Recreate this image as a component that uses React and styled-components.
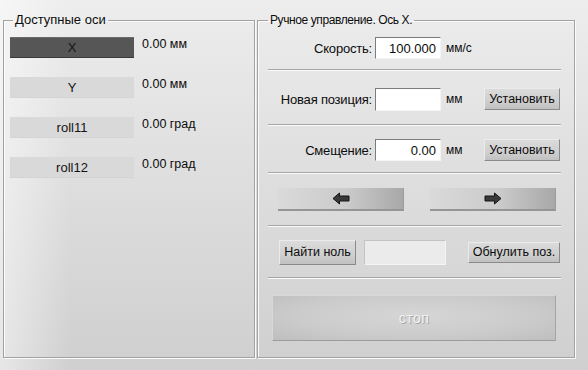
import React from 'react'
import styled, { createGlobalStyle } from 'styled-components'

const Global = createGlobalStyle`
    html, body {
        margin: 0;
        padding: 0;
        background: #d8d8d8;
    }
    body {
        font-family: "Liberation Sans", Arial, sans-serif;
        font-size: 13px;
        color: #0c0c0c;
    }
`

const Window = styled.div`
    width: 588px;
    height: 370px;
    box-sizing: border-box;
    display: flex;
    gap: 2px;
    padding: 13px 13px 12px 3px;
    background:
        linear-gradient(90deg, rgba(255,255,255,0.5) 0%, rgba(255,255,255,0) 12%),
        linear-gradient(180deg, #ededed 0%, #dfdfdf 45%, #cfcfcf 100%);
`

const Group = styled.fieldset`
    margin: 0;
    padding: 0;
    width: ${({ $w }) => $w}px;
    box-sizing: border-box;
    min-width: 0;
    border: 1px solid #a2a2a2;
    box-shadow: inset 1px 1px 0 #fbfbfb, 1px 1px 0 #fbfbfb;
    display: flex;
    flex-direction: column;
`

const Legend = styled.legend`
    margin-left: ${({ $offset }) => $offset}px;
    padding: 0 2px;
    font-size: ${({ $size }) => $size || 13}px;
    letter-spacing: ${({ $ls }) => $ls || 0}px;
    line-height: 14px;
    color: #0c0c0c;
`

const AxisList = styled.div`
    display: flex;
    flex-direction: column;
    gap: 19px;
    padding: 10px 0 0 6px;
`

const AxisRow = styled.div`
    display: flex;
    align-items: flex-start;
    gap: 8px;
`

const AxisButton = styled.div`
    width: 124px;
    height: 21px;
    display: flex;
    align-items: center;
    justify-content: center;
    font-size: 13px;
    background: ${({ $active }) => ($active ? '#565656' : '#d9d9d9')};
    color: #141414;
    border-top: 1px solid ${({ $active }) => ($active ? '#6a6a6a' : '#d9d9d9')};
    border-bottom: 1px solid ${({ $active }) => ($active ? '#3a3a3a' : '#d4d4d4')};
    box-sizing: border-box;
`

const AxisValue = styled.span`
    line-height: 14px;
    font-size: 12.5px;
`

const Section = styled.div`
    height: ${({ $h }) => $h}px;
    display: flex;
    align-items: center;
    padding-top: ${({ $pt }) => $pt || 0}px;
    box-sizing: border-box;
`

const Separator = styled.div`
    height: 1px;
    margin: 0 13px 0 10px;
    background: #a6a6a6;
    border-bottom: 1px solid #fafafa;
`

const FormRow = styled.div`
    display: grid;
    grid-template-columns: 117px 66px 43px 76px;
    align-items: center;
    width: 100%;
`

const Label = styled.span`
    text-align: right;
    padding-right: 3px;
    white-space: nowrap;
    letter-spacing: -0.2px;
`

const Input = styled.div`
    height: ${({ $h }) => $h || 22}px;
    width: ${({ $w }) => $w || 66}px;
    box-sizing: border-box;
    background: ${({ $disabled }) => ($disabled ? '#ebebeb' : '#ffffff')};
    border-top: 1px solid ${({ $disabled }) => ($disabled ? '#c4c4c4' : '#7c7c7c')};
    border-left: 1px solid ${({ $disabled }) => ($disabled ? '#c4c4c4' : '#7c7c7c')};
    border-right: 1px solid #f4f4f4;
    border-bottom: 1px solid #f4f4f4;
    display: flex;
    align-items: center;
    justify-content: flex-end;
    padding-right: 4px;
    font-size: 13px;
`

const Unit = styled.span`
    padding-left: 5px;
    font-size: 12px;
`

const Button = styled.div`
    height: ${({ $h }) => $h || 22}px;
    width: ${({ $w }) => $w}px;
    box-sizing: border-box;
    display: flex;
    align-items: center;
    justify-content: center;
    white-space: nowrap;
    font-size: 12.5px;
    background: linear-gradient(180deg, #dbdbdb 0%, #cfcfcf 60%, #c1c1c1 100%);
    border: 1px solid;
    border-color: #ebebeb #8a8a8a #8a8a8a #ebebeb;
`

const ArrowRow = styled.div`
    display: flex;
    gap: 26px;
    padding-left: 20px;
`

const ArrowButton = styled.div`
    width: 126px;
    height: 23px;
    box-sizing: border-box;
    display: flex;
    align-items: center;
    justify-content: center;
    background: linear-gradient(90deg, #dadada 0%, #cbcbcb 55%, #a8a8a8 100%);
    border-bottom: 2px solid #959595;
    border-right: 1px solid #9c9c9c;
`

const ZeroRow = styled.div`
    display: flex;
    align-items: center;
    padding-left: 21px;
`

const Gap = styled.div`
    width: ${({ $w }) => $w}px;
`

const StopButton = styled.div`
    width: 284px;
    height: 46px;
    margin-left: 14px;
    box-sizing: border-box;
    display: flex;
    align-items: center;
    justify-content: center;
    background: radial-gradient(ellipse at 50% 45%, #d6d6d6 0%, #cbcbcb 60%, #bebebe 100%);
    border: 1px solid;
    border-color: #d8d8d8 #a4a4a4 #9c9c9c #d8d8d8;
    color: #f2f2f2;
    text-shadow: 1px 1px 0 #a5a5a5;
    font-size: 14px;
    letter-spacing: 0.5px;
`

const Arrow = ({ dir }) => (
    <svg width="18" height="13" viewBox="0 0 18 13">
        <path
            d="M1 6.5 L7.5 1 L7.5 4 L17 4 L17 9 L7.5 9 L7.5 12 Z"
            fill="#3a3a3a"
            stroke="#141414"
            strokeWidth="1"
            strokeLinejoin="round"
            transform={dir === 'right' ? 'translate(18 0) scale(-1 1)' : undefined}
        />
    </svg>
)

const axes = [
    { name: 'X', value: '0.00 мм', active: true },
    { name: 'Y', value: '0.00 мм' },
    { name: 'roll11', value: '0.00 град' },
    { name: 'roll12', value: '0.00 град' },
]

const App = () => {
    return (
        <Window>
            <Global />
            <Group $w={252}>
                <Legend $offset={9}>Доступные оси</Legend>
                <AxisList>
                    {axes.map((a) => (
                        <AxisRow key={a.name}>
                            <AxisButton $active={a.active}>{a.name}</AxisButton>
                            <AxisValue>{a.value}</AxisValue>
                        </AxisRow>
                    ))}
                </AxisList>
            </Group>

            <Group $w={318}>
                <Legend $offset={10} $size={12} $ls={-0.4}>Ручное управление. Ось X.</Legend>
                <Section $h={42}>
                    <FormRow>
                        <Label>Скорость:</Label>
                        <Input>100.000</Input>
                        <Unit>мм/с</Unit>
                    </FormRow>
                </Section>
                <Separator />
                <Section $h={53} $pt={3}>
                    <FormRow>
                        <Label>Новая позиция:</Label>
                        <Input $h={23}></Input>
                        <Unit>мм</Unit>
                        <Button $w={76}>Установить</Button>
                    </FormRow>
                </Section>
                <Separator />
                <Section $h={46} $pt={2}>
                    <FormRow>
                        <Label>Смещение:</Label>
                        <Input>0.00</Input>
                        <Unit>мм</Unit>
                        <Button $w={76}>Установить</Button>
                    </FormRow>
                </Section>
                <Separator />
                <Section $h={51}>
                    <ArrowRow>
                        <ArrowButton><Arrow dir="left" /></ArrowButton>
                        <ArrowButton><Arrow dir="right" /></ArrowButton>
                    </ArrowRow>
                </Section>
                <Separator />
                <Section $h={50}>
                    <ZeroRow>
                        <Button $w={77} $h={25}>Найти ноль</Button>
                        <Gap $w={8} />
                        <Input $w={82} $h={25} $disabled />
                        <Gap $w={22} />
                        <Button $w={92} $h={21}>Обнулить поз.</Button>
                    </ZeroRow>
                </Section>
                <Separator />
                <Section $h={78}>
                    <StopButton>стоп</StopButton>
                </Section>
            </Group>
        </Window>
    )
}

export default App
